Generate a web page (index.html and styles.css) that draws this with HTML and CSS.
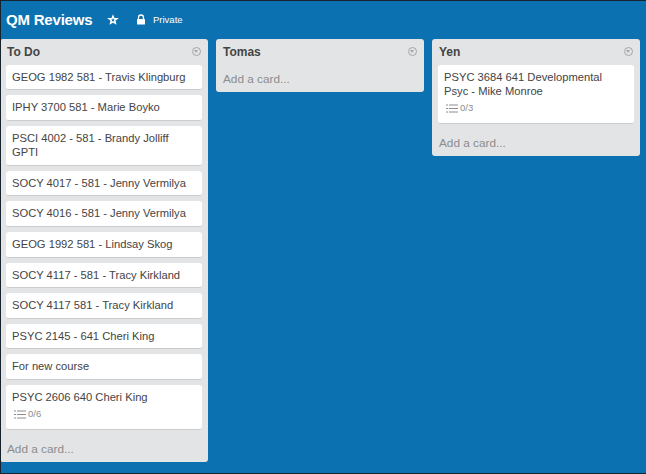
FILE: index.html
```html
<!DOCTYPE html>
<html>
<head>
    <title>QM Reviews</title>
    <link rel="stylesheet" href="styles.css">
</head>
<body>
    <div class="board">
        <div class="board-header">
            <h1>QM Reviews</h1>
            <svg class="star" width="12" height="12" viewBox="0 0 12 12"><path d="M6 2.200l1.100 2.500h2.700L7.700 6.500l.7 2.700L6 7.800 3.600 9.200l.7-2.700L2.200 4.700h2.700z" fill="none" stroke="#fff" stroke-width="1.500"/></svg>
            <svg class="lock" width="10" height="11" viewBox="0 0 10 11"><path d="M2.500 5V3.500a2.500 2.500 0 0 1 5 0V5" fill="none" stroke="#fff" stroke-width="1.300"/><rect x="1" y="5" width="8" height="5.500" rx="0.500" fill="#fff"/></svg>
            <span class="private">Private</span>
        </div>
        <div class="lists">
            <div class="list">
                <div class="list-title"><h2>To Do</h2><span class="menu"></span></div>
                <div class="card">GEOG 1982 581 - Travis Klingburg</div>
                <div class="card">IPHY 3700 581 - Marie Boyko</div>
                <div class="card">PSCI 4002 - 581 - Brandy Jolliff GPTI</div>
                <div class="card">SOCY 4017 - 581 - Jenny Vermilya</div>
                <div class="card">SOCY 4016 - 581 - Jenny Vermilya</div>
                <div class="card">GEOG 1992 581 - Lindsay Skog</div>
                <div class="card">SOCY 4117 - 581 - Tracy Kirkland</div>
                <div class="card">SOCY 4117 581 - Tracy Kirkland</div>
                <div class="card">PSYC 2145 - 641 Cheri King</div>
                <div class="card">For new course</div>
                <div class="card">PSYC 2606 640 Cheri King
                    <div class="badge">
                        <svg width="12" height="9" viewBox="0 0 12 9"><path d="M0 1h2M3 1h9M0 4.500h2M3 4.500h9M0 8h2M3 8h9" stroke="#8c8c8c" stroke-width="1"/></svg>
                        0/6
                    </div>
                </div>
                <div class="add">Add a card...</div>
            </div>
            <div class="list">
                <div class="list-title"><h2>Tomas</h2><span class="menu"></span></div>
                <div class="add">Add a card...</div>
            </div>
            <div class="list">
                <div class="list-title"><h2>Yen</h2><span class="menu"></span></div>
                <div class="card">PSYC 3684 641 Developmental Psyc - Mike Monroe
                    <div class="badge">
                        <svg width="12" height="9" viewBox="0 0 12 9"><path d="M0 1h2M3 1h9M0 4.500h2M3 4.500h9M0 8h2M3 8h9" stroke="#8c8c8c" stroke-width="1"/></svg>
                        0/3
                    </div>
                </div>
                <div class="add">Add a card...</div>
            </div>
        </div>
    </div>
</body>
</html>
```

FILE: styles.css
```css
html, body {
    margin: 0;
    height: 100%;
}
body {
    font-family: "Liberation Sans", Arial, sans-serif;
    font-size: 11.200px;
    color: #444;
    background-color: #0c71b0;
}
.board {
    height: 474px;
    overflow: hidden;
}
/* dark edge of the window, lies over the lists */
.board::before {
    content: "";
    position: absolute;
    top: 0;
    left: 0;
    width: 646px;
    height: 474px;
    box-sizing: border-box;
    border-top: 1px solid #16222c;
    border-left: 1px solid #16222c;
    border-bottom: 1px solid #16222c;
}
.board-header {
    display: flex;
    align-items: center;
    height: 39px;
    color: #fff;
}
.board-header h1 {
    margin: 0 0 0 6px;
    font-size: 15px;
    font-weight: bold;
    letter-spacing: -0.2px;
    width: 101px;
}
.lock {
    margin-left: 17px;
}
.private {
    margin-left: 7px;
    font-size: 9.500px;
}
.lists {
    display: flex;
    align-items: flex-start;
    gap: 8px;
}
.list {
    width: 208px;
    box-sizing: border-box;
    padding: 0 6px;
    background-color: #e2e4e6;
    border-radius: 3px;
}
.list-title {
    display: flex;
    justify-content: space-between;
    align-items: center;
    height: 25.800px;
    padding: 0 0 0 1px;
}
.list-title h2 {
    margin: 0;
    font-size: 12px;
    font-weight: bold;
    color: #444;
}
.menu {
    width: 7px;
    height: 7px;
    margin-right: 1px;
    border: 1.500px solid #a5a8aa;
    border-radius: 50%;
    position: relative;
}
.menu::after {
    content: "";
    position: absolute;
    left: 1px;
    top: 2px;
    border-left: 2.500px solid transparent;
    border-right: 2.500px solid transparent;
    border-top: 3px solid #a5a8aa;
}
.card {
    background-color: #fff;
    border-radius: 3px;
    border-bottom: 1px solid #ccc;
    padding: 5px 6px 5.400px;
    margin-bottom: 5px;
    line-height: 14.200px;
}
.badge {
    display: flex;
    align-items: center;
    gap: 2px;
    margin-top: 3px;
    padding: 0 0 2px 2px;
    font-size: 9.500px;
    line-height: 14px;
    color: #8c8c8c;
}
.add {
    height: 27.700px;
    line-height: 28px;
    padding: 0 0 0 1px;
    font-size: 11.800px;
    color: #8c8c8c;
}
```
